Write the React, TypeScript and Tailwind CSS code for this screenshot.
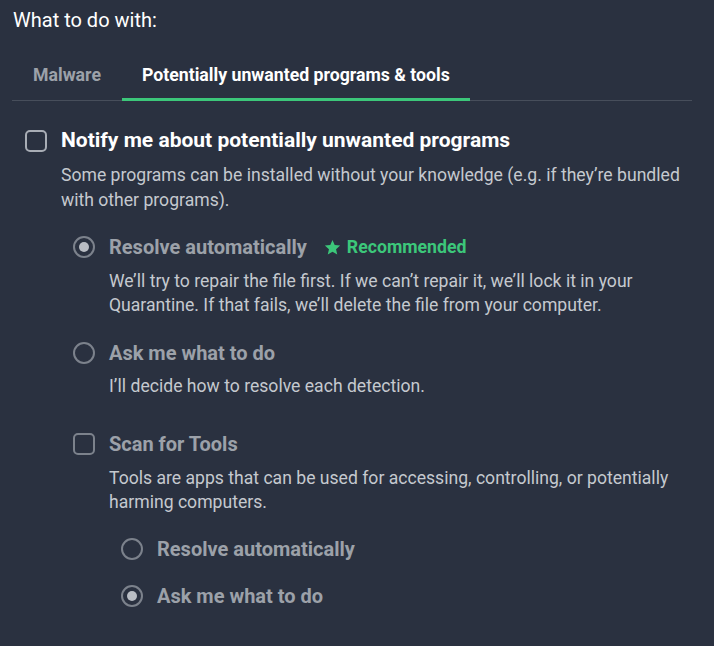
import React, { useState } from 'react';

const Radio: React.FC<{ checked: boolean }> = ({ checked }) => (
    <span className="w-[22px] h-[22px] shrink-0 rounded-full border-2 border-[#7c828c] flex items-center justify-center">
        {checked && <span className="w-[10px] h-[10px] rounded-full bg-[#b9bdc4]" />}
    </span>
);

const Checkbox: React.FC<{ light?: boolean }> = ({ light }) => (
    <span
        className={`w-[22px] h-[22px] shrink-0 rounded-[5px] border-2 ${light ? 'border-[#a8adb5]' : 'border-[#7c828c]'}`}
    />
);

export default function App() {
    const [activeTab, setActiveTab] = useState<'malware' | 'pup'>('pup');

    return (
        <div className="w-full h-[646px] bg-[#2a3140] font-['Roboto',sans-serif] overflow-hidden">
            <div className="pl-[13px] pt-[8px] text-[20px] leading-6 text-white">What to do with:</div>

            {/* Tabs */}
            <div className="ml-[12px] mr-[22px] mt-[18px] flex border-b border-[#474e5b]">
                <button
                    onClick={() => setActiveTab('malware')}
                    className={`px-[21px] h-[51px] -mb-px text-[17.7px] font-bold ${
                        activeTab === 'malware' ? 'text-white border-b-[3px] border-[#3cc77a]' : 'text-[#9ca1a9]'
                    }`}
                >
                    Malware
                </button>
                <button
                    onClick={() => setActiveTab('pup')}
                    className={`px-[20px] h-[51px] pt-[3px] -mb-px text-[17.7px] font-bold ${
                        activeTab === 'pup' ? 'text-white border-b-[3px] border-[#3cc77a]' : 'text-[#9ca1a9]'
                    }`}
                >
                    Potentially unwanted programs &amp; tools
                </button>
            </div>

            <div className="pl-[25px] pr-[22px] pt-[28px]">
                <div className="flex items-center gap-[14px] h-6">
                    <Checkbox light />
                    <span className="text-[21px] font-bold text-white whitespace-nowrap">Notify me about potentially unwanted programs</span>
                </div>
                <p className="ml-[36px] mt-[10px] text-[17.6px] leading-[25px] text-[#c5c9cf] whitespace-nowrap">
                    Some programs can be installed without your knowledge (e.g. if they’re bundled
                    <br />
                    with other programs).
                </p>

                <div className="ml-[48px]">
                    <div className="mt-[22px] flex items-center gap-[14px] h-6 whitespace-nowrap">
                        <Radio checked />
                        <span className="text-[20px] font-bold text-[#9ca1a9]">Resolve automatically</span>
                        <span className="ml-[3px] flex items-center gap-[6px] text-[17.7px] font-bold text-[#3cc77a]">
                            <svg width="17" height="17" viewBox="0 0 24 24" fill="currentColor">
                                <path d="M12 1.5l3.1 7.1 7.7.7-5.8 5.1 1.7 7.6L12 18l-6.7 4 1.7-7.6-5.8-5.1 7.7-.7z" />
                            </svg>
                            Recommended
                        </span>
                    </div>
                    <p className="ml-[36px] mt-[10px] text-[17.6px] leading-[24px] text-[#c5c9cf] whitespace-nowrap">
                        We’ll try to repair the file first. If we can’t repair it, we’ll lock it in your
                        <br />
                        Quarantine. If that fails, we’ll delete the file from your computer.
                    </p>

                    <div className="mt-[24px] flex items-center gap-[14px] h-6">
                        <Radio checked={false} />
                        <span className="text-[20px] font-bold text-[#9ca1a9]">Ask me what to do</span>
                    </div>
                    <p className="ml-[36px] mt-[9px] text-[17.6px] leading-[24px] text-[#c5c9cf]">
                        I’ll decide how to resolve each detection.
                    </p>

                    <div className="mt-[34px] flex items-center gap-[14px] h-6">
                        <Checkbox />
                        <span className="text-[20px] font-bold text-[#9ca1a9]">Scan for Tools</span>
                    </div>
                    <p className="ml-[36px] mt-[10px] text-[17.6px] leading-[24px] text-[#c5c9cf] whitespace-nowrap">
                        Tools are apps that can be used for accessing, controlling, or potentially
                        <br />
                        harming computers.
                    </p>

                    <div className="ml-[48px]">
                        <div className="mt-[23px] flex items-center gap-[14px] h-6">
                            <Radio checked={false} />
                            <span className="text-[20px] font-bold text-[#9ca1a9]">Resolve automatically</span>
                        </div>
                        <div className="mt-[23px] flex items-center gap-[14px] h-6">
                            <Radio checked />
                            <span className="text-[20px] font-bold text-[#9ca1a9]">Ask me what to do</span>
                        </div>
                    </div>
                </div>
            </div>
        </div>
    );
}
